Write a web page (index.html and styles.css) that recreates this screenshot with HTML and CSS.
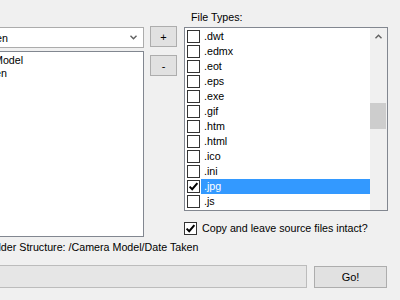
FILE: index.html
```html
<!DOCTYPE html>
<html lang="en">
<head>
    <meta charset="UTF-8">
    <title>Photo Sorter</title>
    <link rel="stylesheet" href="styles.css">
</head>
<body>

    <div class="app">
        <div class="top">
            <!-- Structure de dossiers -->
            <div class="left-col">
                <div class="combo">
                    <span class="combo-text">Date Taken</span>
                    <svg class="combo-arrow" width="7" height="5" viewBox="0 0 7 5"><path d="M0.5 0.8 L3.5 3.8 L6.5 0.8" fill="none" stroke="#606060" stroke-width="1.4"/></svg>
                </div>
                <div class="structure-list">
                    <div class="structure-item">Camera Model</div>
                    <div class="structure-item">Date Taken</div>
                </div>
            </div>

            <div class="btn-col">
                <button class="small-btn">+</button>
                <button class="small-btn">-</button>
            </div>

            <!-- Types de fichiers -->
            <div class="right-col">
                <div class="types-label">File Types:</div>
                <div class="types-list">
                    <div class="types-items">
                        <div class="type-row"><span class="check"></span><span class="type-name">.dwt</span></div>
                        <div class="type-row"><span class="check"></span><span class="type-name">.edmx</span></div>
                        <div class="type-row"><span class="check"></span><span class="type-name">.eot</span></div>
                        <div class="type-row"><span class="check"></span><span class="type-name">.eps</span></div>
                        <div class="type-row"><span class="check"></span><span class="type-name">.exe</span></div>
                        <div class="type-row"><span class="check"></span><span class="type-name">.gif</span></div>
                        <div class="type-row"><span class="check"></span><span class="type-name">.htm</span></div>
                        <div class="type-row"><span class="check"></span><span class="type-name">.html</span></div>
                        <div class="type-row"><span class="check"></span><span class="type-name">.ico</span></div>
                        <div class="type-row"><span class="check"></span><span class="type-name">.ini</span></div>
                        <div class="type-row"><span class="check checked"><svg width="11" height="11" viewBox="0 0 11 11"><path d="M1.6 5.6 L4.2 8.2 L9.4 2.2" fill="none" stroke="#000" stroke-width="2"/></svg></span><span class="type-name selected">.jpg</span></div>
                        <div class="type-row"><span class="check"></span><span class="type-name">.js</span></div>
                    </div>
                    <div class="scrollbar">
                        <div class="scroll-arrow">
                            <svg width="7" height="5" viewBox="0 0 7 5"><path d="M0.5 4.2 L3.5 1.2 L6.5 4.2" fill="none" stroke="#606060" stroke-width="1.4"/></svg>
                        </div>
                        <div class="scroll-thumb"></div>
                        <div class="scroll-arrow bottom">
                            <svg width="7" height="5" viewBox="0 0 7 5"><path d="M0.5 0.8 L3.5 3.8 L6.5 0.8" fill="none" stroke="#606060" stroke-width="1.4"/></svg>
                        </div>
                    </div>
                </div>
                <div class="copy-row">
                    <span class="check checked"><svg width="11" height="11" viewBox="0 0 11 11"><path d="M1.6 5.6 L4.2 8.2 L9.4 2.2" fill="none" stroke="#000" stroke-width="2"/></svg></span>
                    <span>Copy and leave source files intact?</span>
                </div>
            </div>
        </div>

        <div class="folder-label">Folder Structure: /Camera Model/Date Taken</div>

        <div class="bottom">
            <div class="progress"></div>
            <button class="go-btn">Go!</button>
        </div>
    </div>

</body>
</html>
```

FILE: styles.css
```css
/* Fenêtre */
body {
    margin: 0;
    background-color: #f0f0f0;
    font-family: "Liberation Sans", Arial, sans-serif;
    font-size: 10.7px;
    color: #000;
    overflow: hidden;
}

.app {
    width: 444px;
    margin-left: -56px;
}

.top {
    display: flex;
    align-items: flex-start;
}

/* Colonne de gauche */
.left-col {
    width: 200px;
    padding-top: 27px;
    display: flex;
    flex-direction: column;
    gap: 3px;
}

.combo {
    height: 21px;
    box-sizing: border-box;
    border: 1px solid #acacac;
    background-color: #fff;
    display: flex;
    align-items: center;
    padding: 0 6px 0 9px;
}

.combo-text {
    flex: 1;
}

.structure-list {
    height: 186px;
    box-sizing: border-box;
    border: 1px solid #828790;
    background-color: #fff;
    padding: 2px 0 0 8px;
}

.structure-item {
    height: 13px;
    line-height: 13px;
}

/* Boutons + et - */
.btn-col {
    margin: 26px 7px 0 6px;
    display: flex;
    flex-direction: column;
    gap: 8px;
}

.small-btn,
.go-btn {
    font-family: inherit;
    font-size: 11px;
    color: #000;
    background-color: #e1e1e1;
    border: 1px solid #adadad;
    padding: 0;
}

.small-btn {
    width: 27px;
    height: 21px;
}

/* Colonne de droite */
.right-col {
    width: 204px;
}

.types-label {
    height: 27px;
    box-sizing: border-box;
    padding: 10px 0 0 7px;
    line-height: 14px;
}

.types-list {
    height: 184px;
    box-sizing: border-box;
    border: 1px solid #828790;
    background-color: #fff;
    display: flex;
}

.types-items {
    flex: 1;
    padding: 1px 0 0 2px;
}

.type-row {
    height: 15px;
    display: flex;
    align-items: center;
}

.check {
    width: 13px;
    height: 13px;
    box-sizing: border-box;
    border: 1px solid #333;
    background-color: #fff;
    display: flex;
    align-items: center;
    justify-content: center;
    flex-shrink: 0;
}

.type-name {
    flex: 1;
    height: 15px;
    line-height: 15px;
    margin-left: 1px;
    padding-left: 3px;
}

.type-name.selected {
    background-color: #3399ff;
    color: #fff;
}

.scrollbar {
    width: 17px;
    background-color: #f0f0f0;
    display: flex;
    flex-direction: column;
}

.scroll-arrow {
    height: 17px;
    display: flex;
    align-items: center;
    justify-content: center;
}

.scroll-arrow.bottom {
    margin-top: auto;
}

.scroll-thumb {
    height: 26px;
    margin: 58px 1px 0 0;
    background-color: #cdcdcd;
}

.copy-row {
    margin-top: 11px;
    display: flex;
    align-items: center;
    gap: 5px;
    line-height: 13px;
}

/* Bas de la fenêtre */
.folder-label {
    margin: 3px 0 0 42px;
    line-height: 14px;
}

.bottom {
    width: 443px;
    margin-top: 11px;
    display: flex;
    align-items: flex-end;
    gap: 7px;
}

.progress {
    flex: 1;
    height: 23px;
    box-sizing: border-box;
    border: 1px solid #bcbcbc;
    background-color: #e6e6e6;
}

.go-btn {
    width: 73px;
    height: 22px;
}
```
